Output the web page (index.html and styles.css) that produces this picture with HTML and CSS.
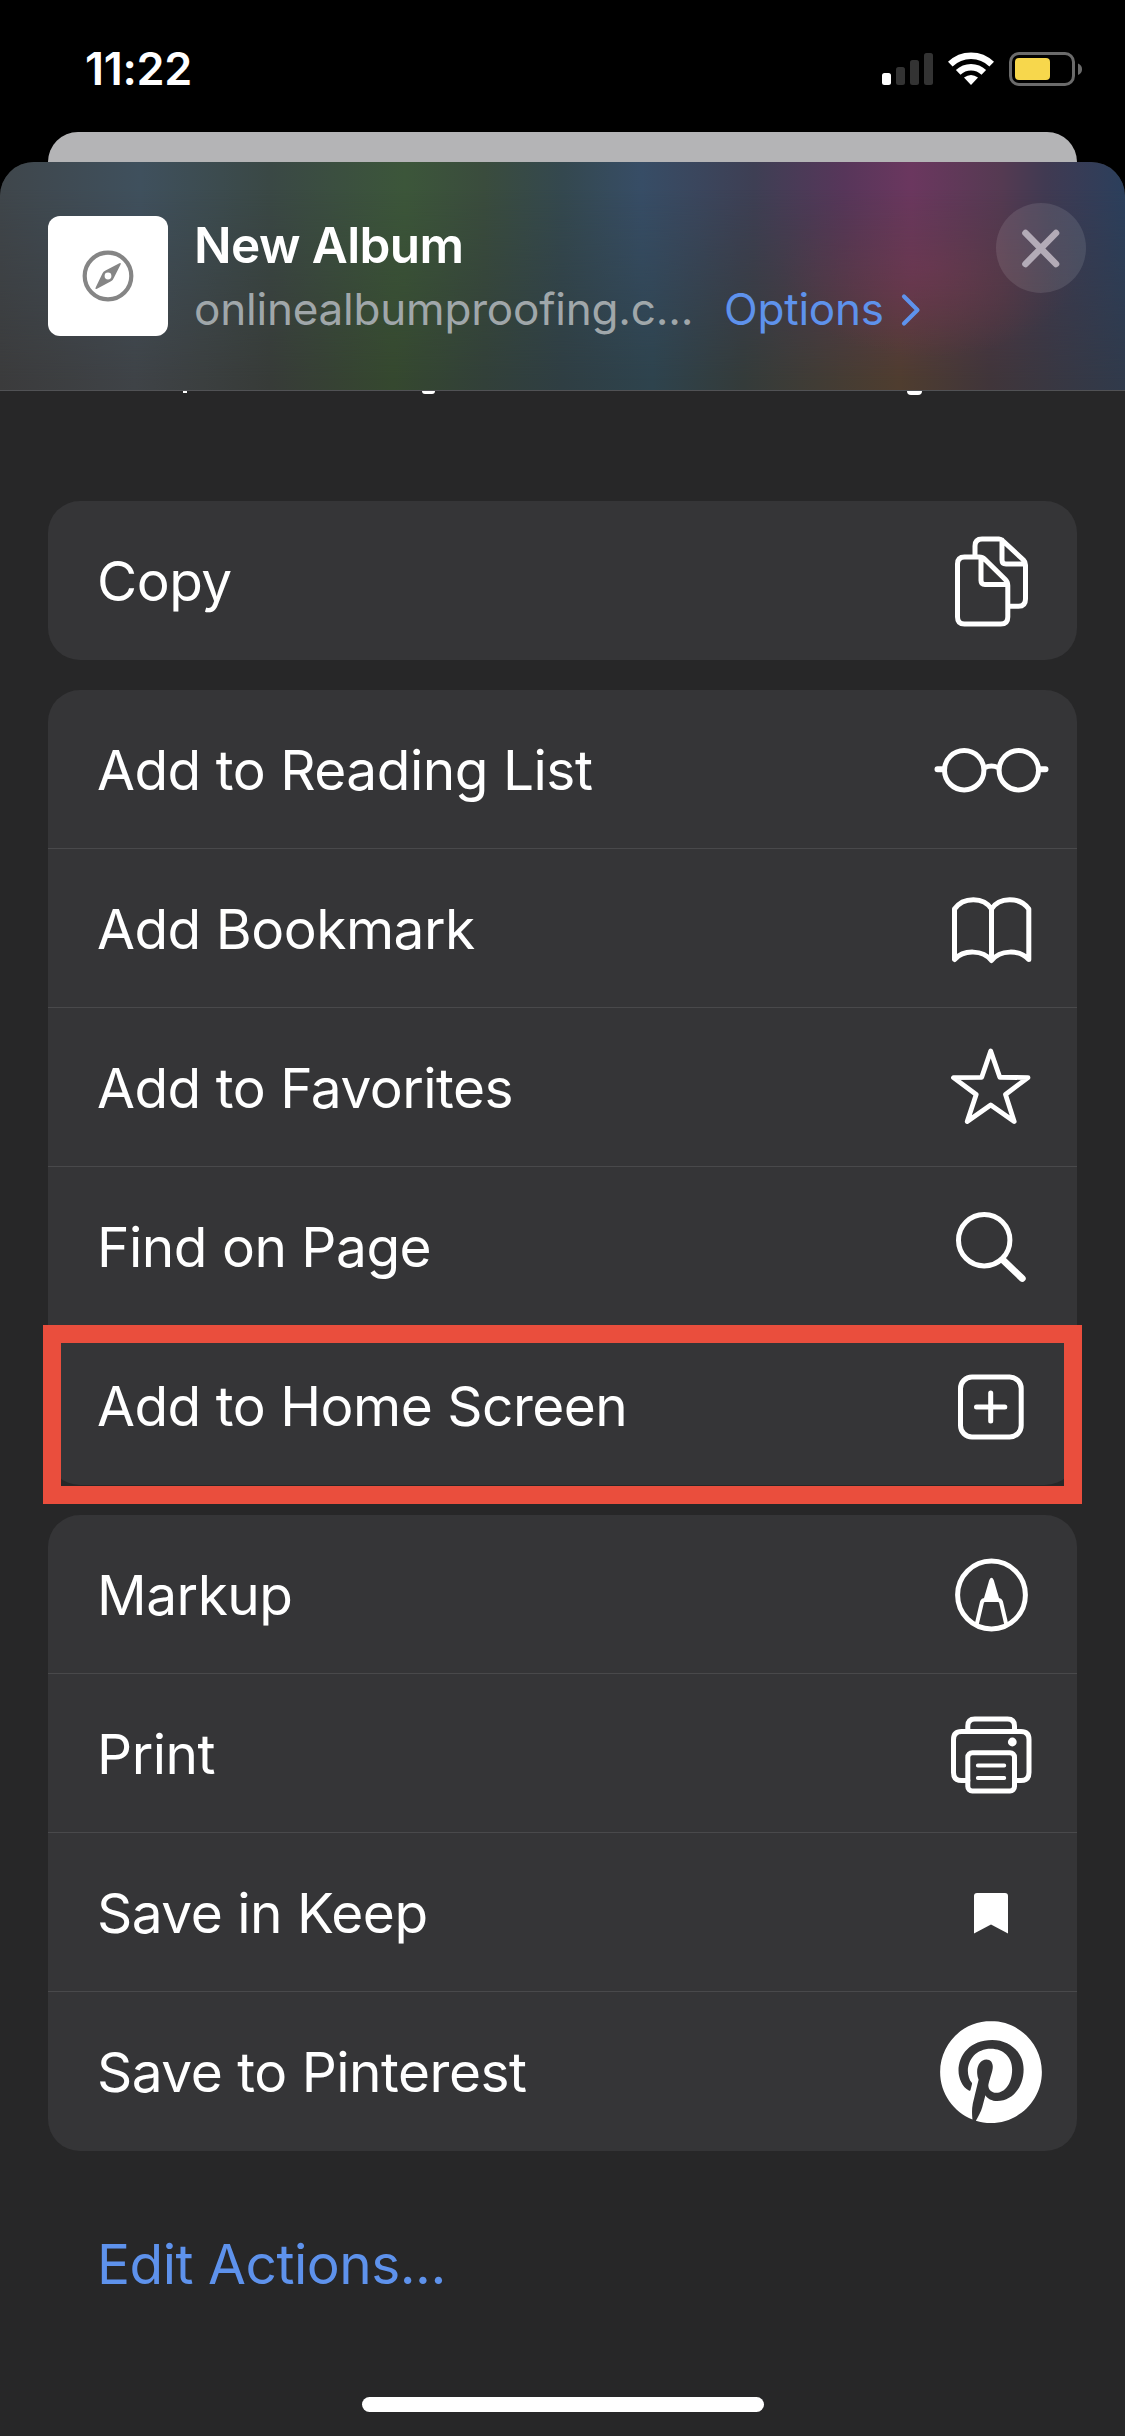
FILE: index.html
```html
<!DOCTYPE html>
<html lang="en">
<head>
<meta charset="utf-8">
<title>Share Sheet</title>
<link rel="stylesheet" href="styles.css">
</head>
<body>
<div class="phone">
  <div class="status">
    <span class="time">11:22</span>
    <div class="indicators">
      <svg class="signal" viewBox="0 0 51 32"><rect x="0" y="20" width="9" height="12" rx="2.5" fill="#fff"/><g fill="#333"><rect x="14" y="14" width="9" height="18" rx="2.5"/><rect x="28" y="7" width="9" height="25" rx="2.5"/><rect x="42" y="0" width="9" height="32" rx="2.5"/></g></svg>
      <svg class="wifi" viewBox="0 0 46 33"><g fill="none" stroke="#fff" stroke-width="6.6"><path d="M2.3 12.2A29.5 29.5 0 0 1 43.7 12.2"/><path d="M10.2 20.4A18.3 18.3 0 0 1 35.8 20.4"/></g><path d="M16 25.6Q23 20.6 30 25.6L23 33Z" fill="#fff"/></svg>
      <svg class="battery" viewBox="0 0 74 34"><rect x="1.5" y="1.5" width="63" height="31" rx="8.5" fill="none" stroke="#6b6b6b" stroke-width="3"/><rect x="6" y="6" width="35" height="22" rx="4" fill="#f7d74c"/><path d="M69 11.5Q73 13 73 17.2T69 23Z" fill="#6b6b6b"/></svg>
    </div>
  </div>
  <div class="card-behind"></div>
  <main class="sheet">
    <header class="head">
      <div class="thumb">
        <svg viewBox="0 0 52 52"><circle cx="26" cy="26" r="23.3" fill="none" stroke="#858585" stroke-width="4.2"/><path fill="#858585" fill-rule="evenodd" d="M37.4 13.3Q39.4 12.2 38.6 14.5L31.9 27.8Q31.1 30.2 29 31.3L15 38.7Q12.5 39.6 13.8 37.2L20.4 23.4Q21.2 21.6 23.5 20.5ZM26 22.6a3.4 3.4 0 1 0 0 6.8a3.4 3.4 0 1 0 0-6.8Z"/></svg>
      </div>
      <div class="info">
        <div class="title">New Album</div>
        <div class="sub">
          <span class="url">onlinealbumproofing.c...</span>
          <a class="options">Options</a>
          <svg class="chevron" viewBox="0 0 20 34"><path d="M3 3.5L16.5 17L3 30.5" fill="none" stroke="#5e92ec" stroke-width="4.2" stroke-linecap="round" stroke-linejoin="round"/></svg>
        </div>
      </div>
      <div class="close">
        <svg viewBox="0 0 90 90"><path d="M29.5 30L60 61M60 30L29.5 61" stroke="#b3abb7" stroke-width="6.6" stroke-linecap="round"/></svg>
      </div>
    </header>
    <div class="peek">
      <i class="tail tail-p"></i><i class="tail tail-g"></i><i class="tail tail-g2"></i>
    </div>

    <section class="group">
      <div class="row"><span>Copy</span>
        <svg class="icon" viewBox="0 0 120 120"><path d="M44 35V25Q44 18 51 18H68Q70 18 72 20L92.500 39Q94.500 41 94.500 44V78Q94.500 85.300 87.500 85.300H79M71 19V39Q71 43 75 43H94"/><path d="M33.500 36H48Q51.500 36 54 38.500L74.300 58.500Q76.800 61 76.800 64.500V96Q76.800 103 69.800 103H33.500Q26.500 103 26.500 96V43Q26.500 36 33.500 36ZM50 37V59.500Q50 63.500 54 63.500H76"/></svg></div>
    </section>

    <section class="group">
      <div class="row"><span>Add to Reading List</span>
        <svg class="icon" viewBox="0 0 120 120"><circle cx="33.200" cy="60.200" r="19.700"/><circle cx="87.800" cy="60.200" r="19.700"/><path d="M54 57.500Q60.500 54.500 67 57.500"/><path d="M6.500 59.300H13M108 59.300H114.500" stroke-width="6"/></svg></div>
      <div class="row"><span>Add Bookmark</span>
        <svg class="icon" viewBox="0 0 120 120"><path d="M23.500 90.500V40C32 27.500 53 27.500 60.500 40C68 27.500 89 27.500 97.800 40V90.500C88 80 69 81 60.500 91.500C52 81 33 80 23.500 90.500ZM60.500 40V91"/></svg></div>
      <div class="row"><span>Add to Favorites</span>
        <svg class="icon" viewBox="0 0 120 120"><path d="M59.700 23L68.800 49.300L97 49.600L74.500 66.500L83.200 93.500L59.700 77L36.200 93.500L45.200 66.500L22.500 49.600L50.700 49.300Z" stroke-width="4.800"/></svg></div>
      <div class="row"><span>Find on Page</span>
        <svg class="icon" viewBox="0 0 120 120"><circle cx="53.200" cy="53.200" r="25.700"/><path d="M72.500 73.500L91.300 91.500" stroke-width="6.800"/></svg></div>
      <div class="row marked"><span>Add to Home Screen</span>
        <svg class="icon" viewBox="0 0 120 120"><rect x="29.500" y="31" width="60.700" height="60" rx="11.500"/><path d="M45.500 61H73.800M59.700 47V75"/></svg></div>
    </section>

    <section class="group">
      <div class="row"><span>Markup</span>
        <svg class="icon" viewBox="0 0 120 120"><circle cx="60.500" cy="60" r="33.900"/><path d="M45.700 89.500L51 67Q51.700 65 54 65H67Q69.300 65 70 67L75.300 89.500" stroke-width="4"/><path d="M52 66.500L58.300 45Q60.500 40.500 62.700 45L69 66.500Z" fill="#fff" stroke="none"/></svg></div>
      <div class="row"><span>Print</span>
        <svg class="icon" viewBox="0 0 120 120"><path d="M36.800 86.500H30.500Q22.500 86.500 22.500 78.500V45.500Q22.500 37.500 30.500 37.500H90Q98 37.500 98 45.500V78.500Q98 86.500 90 86.500H83.500M36.800 37V32Q36.800 25 43.800 25H76.500Q83.500 25 83.500 32V37"/><rect x="36.800" y="58.800" width="46.700" height="38.300" rx="4.500"/><path d="M46.800 71.500H73.300M46.800 84H73.300" stroke-width="3.800"/><circle cx="81.300" cy="48" r="4.400" fill="#fff" stroke="none"/></svg></div>
      <div class="row"><span>Save in Keep</span>
        <svg class="icon" viewBox="0 0 120 120"><path d="M46 40H74Q77 40 77 43V80.500L60 71.600L43 80.500V43Q43 40 46 40Z" fill="#fff" stroke="none"/></svg></div>
      <div class="row"><span>Save to Pinterest</span>
        <svg class="icon" viewBox="0 0 120 120"><g transform="translate(9 9) scale(4.250)"><path fill="#fff" stroke="none" d="M12.017 0C5.396 0 .029 5.367.029 11.987c0 5.079 3.158 9.417 7.618 11.162-.105-.949-.199-2.403.041-3.439.219-.937 1.406-5.957 1.406-5.957s-.359-.72-.359-1.781c0-1.663.967-2.911 2.168-2.911 1.024 0 1.518.769 1.518 1.688 0 1.029-.653 2.567-.992 3.992-.285 1.193.6 2.165 1.775 2.165 2.128 0 3.768-2.245 3.768-5.487 0-2.861-2.063-4.869-5.008-4.869-3.41 0-5.409 2.562-5.409 5.199 0 1.033.394 2.143.889 2.741.099.12.112.225.085.345-.09.375-.293 1.199-.334 1.363-.053.225-.172.271-.401.165-1.495-.69-2.433-2.878-2.433-4.646 0-3.776 2.748-7.252 7.92-7.252 4.158 0 7.392 2.967 7.392 6.923 0 4.135-2.607 7.462-6.233 7.462-1.214 0-2.354-.629-2.758-1.379l-.749 2.848c-.269 1.045-1.004 2.352-1.498 3.146 1.123.345 2.306.535 3.55.535 6.607 0 11.985-5.365 11.985-11.987C23.97 5.39 18.592.026 11.985.026L12.017 0z"/></g></svg></div>
    </section>

    <a class="edit">Edit Actions...</a>
    <div class="home-bar"></div>
  </main>
</div>
</body>
</html>
```
FILE: styles.css
```css
* { box-sizing: border-box; }
body {
  margin: 0;
  background: #000;
  font-family: Inter, "Liberation Sans", sans-serif;
  color: #fff;
}
svg { display: block; flex: none; }
.phone {
  width: 1125px;
  height: 2436px;
  overflow: hidden;
  display: flex;
  flex-direction: column;
}

/* Status bar */
.status {
  height: 132px;
  flex: none;
  padding: 0 42px 0 85px;
  display: flex;
  justify-content: space-between;
}
.time {
  margin-top: 39px;
  height: 60px;
  font-size: 45px;
  line-height: 60px;
  font-weight: 600;
  letter-spacing: -0.3px;
}
.indicators { display: flex; margin-top: 52px; }
.signal { width: 51px; height: 32px; margin-top: 1px; }
.wifi { width: 46px; height: 33px; margin-left: 15px; }
.battery { width: 74px; height: 34px; margin-left: 15px; }

.card-behind {
  height: 30px;
  flex: none;
  margin: 0 48px;
  border-radius: 30px 30px 0 0;
  background: #b4b4b6;
}

/* Sheet */
.sheet {
  flex: 1;
  display: flex;
  flex-direction: column;
  background: #272728;
  border-radius: 34px 34px 0 0;
  overflow: hidden;
}
.head {
  position: relative;
  height: 229px;
  flex: none;
  display: flex;
  padding: 53px 39px 0 48px;
  border-bottom: 1px solid #515255;
  background: linear-gradient(90deg, #3f464b 0%, #3f505d 12.5%, #3a4845 24%, #3c563a 36%, #3a4c3d 43%, #34484f 50%, #374d66 57%, #3e3f54 67%, #57365a 75%, #6b375f 81%, #553a52 89%, #403a52 93%, #2b3f5c 100%);
}
.head::before {
  content: "";
  position: absolute;
  inset: 0;
  background:
    radial-gradient(ellipse 150px 90px at 930px 105px, #69393f 0%, #69393f00 100%),
    linear-gradient(90deg, #3b3b3c 0%, #3f4347 12%, #373b38 24%, #35482f 35%, #324039 43%, #2f3e43 50%, #2e434d 58%, #343b3a 66%, #4f3d2f 80%, #40353a 88%, #303a4b 100%);
  mask-image: linear-gradient(180deg, transparent 12%, #000 96%);
}
.head > * { position: relative; }
.thumb {
  width: 120px;
  height: 120px;
  flex: none;
  margin: 1px 26px 0 0;
  display: grid;
  place-items: center;
  background: #fff;
  border-radius: 12px;
}
.thumb svg { width: 52px; height: 52px; }
.info { flex: 1; }
.title {
  font-size: 49.5px;
  line-height: 60px;
  font-weight: 600;
  letter-spacing: -0.6px;
}
.sub {
  display: flex;
  margin-top: 6px;
  font-size: 44px;
  line-height: 56px;
  white-space: nowrap;
}
.url { width: 530px; color: #a0a7aa; letter-spacing: -0.2px; }
.options { width: 177px; color: #5e92ec; letter-spacing: -0.2px; }
.chevron { width: 20px; height: 34px; margin-top: 12px; }
.close {
  width: 90px;
  height: 90px;
  margin-top: -12px;
  border-radius: 50%;
  background: rgba(255, 255, 255, 0.1);
}

/* Descenders of the contact names scrolled under the header */
.peek { height: 110px; flex: none; display: flex; align-items: flex-start; }
.tail { background: #fff; }
.tail-p { width: 4px; height: 2px; margin-left: 183px; }
.tail-g { width: 13px; height: 3px; margin-left: 235px; border-radius: 0 0 7px 7px; }
.tail-g2 { width: 15px; height: 4px; margin-left: 472px; border-radius: 0 0 8px 8px; }

/* Action groups */
.group {
  flex: none;
  margin: 0 48px 30px;
  background: #353537;
  border-radius: 32px;
}
.row {
  position: relative;
  height: 159px;
  padding: 0 26px 0 49px;
  display: flex;
  align-items: center;
  justify-content: space-between;
  font-size: 55px;
  letter-spacing: -0.5px;
  white-space: nowrap;
}
.row:not(:last-child) { box-shadow: inset 0 -1px #49494b; }
.icon {
  width: 120px;
  height: 120px;
  fill: none;
  stroke: #fff;
  stroke-width: 5;
  stroke-linecap: round;
  stroke-linejoin: round;
}
.marked::after {
  content: "";
  position: absolute;
  inset: -1px -5px -19px;
  border: 18px solid #ea4e3d;
}
.edit {
  margin: 51px 0 0 97px;
  font-size: 55px;
  line-height: 64px;
  letter-spacing: -0.5px;
  color: #5e92ec;
}
.home-bar {
  width: 402px;
  height: 15px;
  margin: auto auto 24px 362px;
  border-radius: 8px;
  background: #fff;
}
```
